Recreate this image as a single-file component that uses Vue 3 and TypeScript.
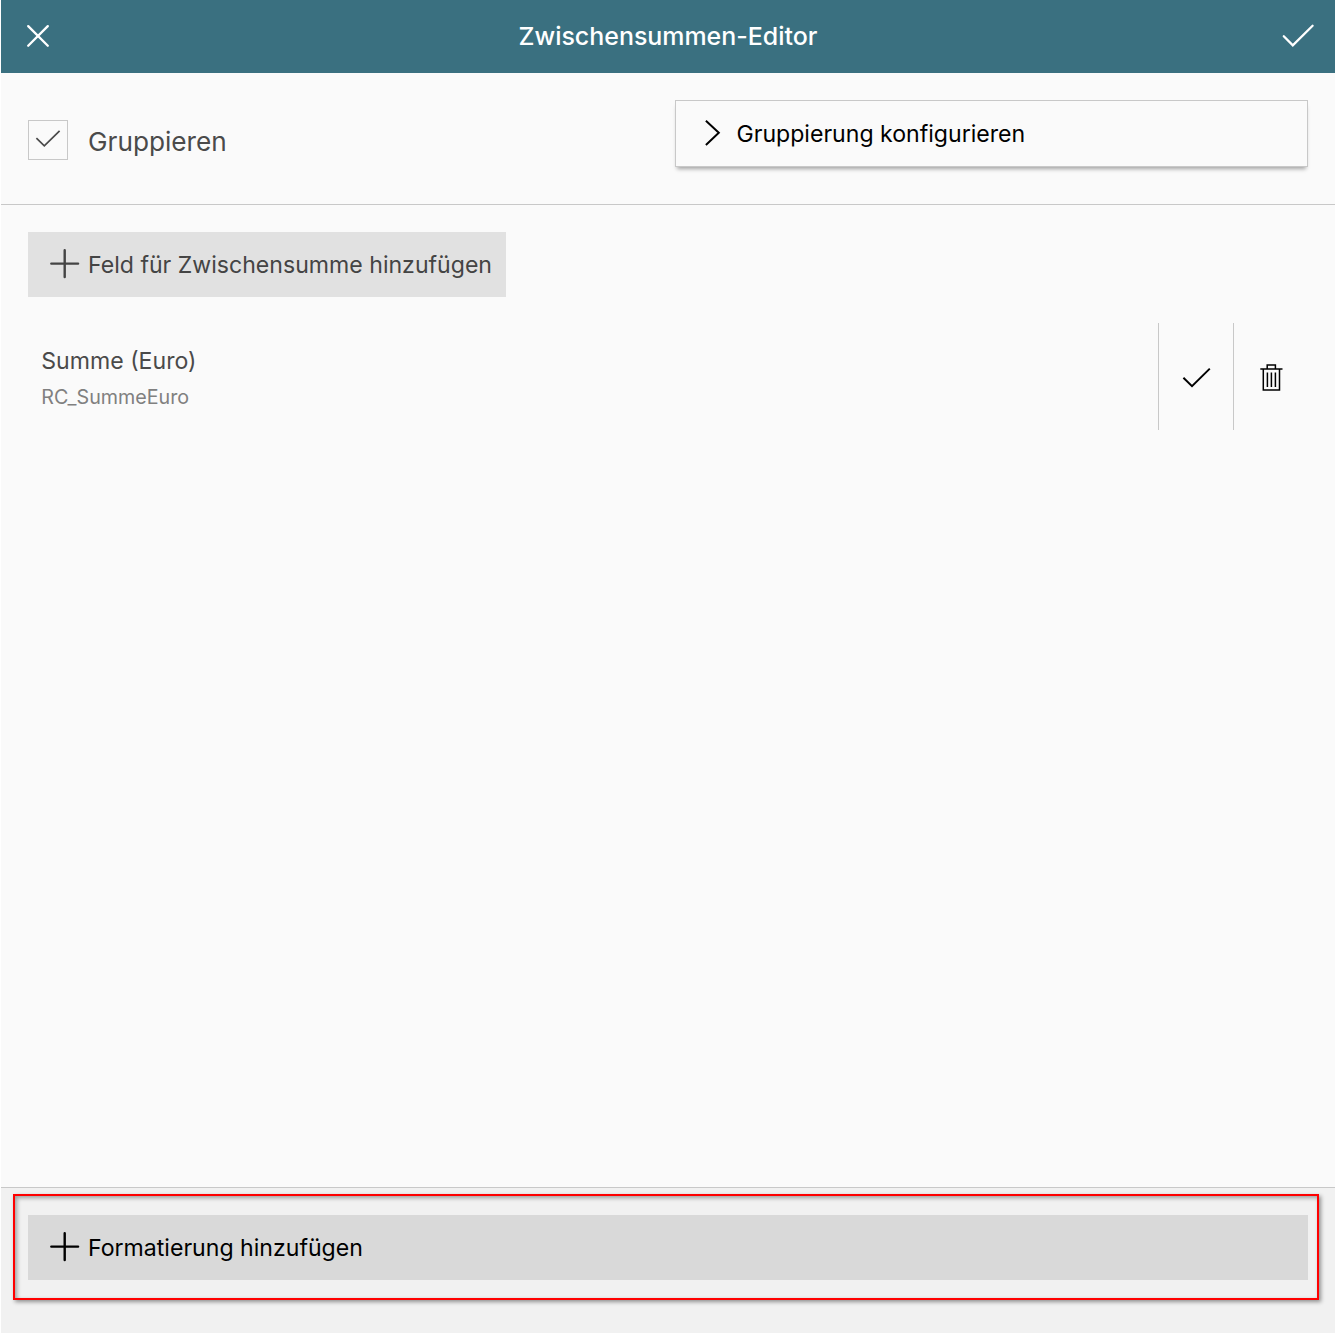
<script setup lang="ts">
import { ref } from 'vue'

interface SubtotalField {
  label: string
  name: string
}

const grouped = ref(true)
const fields = ref<SubtotalField[]>([{ label: 'Summe (Euro)', name: 'RC_SummeEuro' }])
</script>

<template>
  <div class="editor">
    <header class="bar">
      <svg width="24" height="24" viewBox="0 0 24 24">
        <path d="M2.2 2.1 21.8 21.7M21.8 2.1 2.2 21.7" />
      </svg>
      <h1>Zwischensummen-Editor</h1>
      <svg width="34" height="24" viewBox="0 0 34 24">
        <path d="M2.8 12.2 11.8 21.4 31.6 1.8" />
      </svg>
    </header>

    <section class="grouping">
      <div class="toggle" @click="grouped = !grouped">
        <span class="box">
          <svg v-if="grouped" width="38" height="38" viewBox="0 0 38 38">
            <path d="M7.4 17.2 15.3 24.8 30.6 9.8" />
          </svg>
        </span>
        <span>Gruppieren</span>
      </div>
      <button class="configure">
        <svg width="18" height="28" viewBox="0 0 18 28">
          <path d="M2.9 1.7 15.8 13.8 2.9 25.9" />
        </svg>
        <span>Gruppierung konfigurieren</span>
      </button>
    </section>

    <main class="content">
      <button class="add">
        <svg width="30" height="30" viewBox="0 0 30 30"><path d="M1.3 14.6H28.1M14.7 1.2V28" /></svg>
        <span>Feld für Zwischensumme hinzufügen</span>
      </button>
      <div v-for="field in fields" :key="field.name" class="row">
        <div class="names">
          <div class="label">{{ field.label }}</div>
          <div class="name">{{ field.name }}</div>
        </div>
        <div class="action">
          <svg width="74" height="107" viewBox="0 0 74 107">
            <path d="M24.4 54.8 33 63.2 50.8 45.6" stroke-width="2" />
          </svg>
        </div>
        <div class="action">
          <svg width="74" height="107" viewBox="0 0 74 107">
            <path d="M26.3 46H48.5M33.2 45.5V41.9H41.4V45.5" stroke-width="1.5" />
            <path d="M29.3 46V67.1H45.5V46M33.4 49.5V64M37.4 49.5V64M41.4 49.5V64" stroke-width="1.5" />
          </svg>
        </div>
      </div>
    </main>

    <footer class="bottom">
      <div class="frame">
        <button class="add wide">
          <svg width="30" height="30" viewBox="0 0 30 30"><path d="M1.3 14.6H28.1M14.7 1.2V28" /></svg>
          <span>Formatierung hinzufügen</span>
        </button>
      </div>
    </footer>
  </div>
</template>

<style>
body {
  background: #fff;
}
</style>

<style scoped>
* {
  box-sizing: border-box;
}

.editor {
  width: 1334px;
  height: 1333px;
  margin-left: 1px;
  display: flex;
  flex-direction: column;
  background: #fafafa;
  font-family: Inter, sans-serif;
  font-size: 23.1px;
  color: #4a4a4a;
}

svg {
  display: block;
  flex: none;
  fill: none;
  stroke: currentColor;
  stroke-width: 2;
}

span {
  white-space: nowrap;
}

button {
  border: 0;
  margin: 0;
  padding: 0;
  font: inherit;
  line-height: 28px;
  color: inherit;
  text-align: left;
}

.bar {
  height: 73px;
  padding: 0 20px 1px 25px;
  display: flex;
  align-items: center;
  justify-content: space-between;
  background: #3a7080;
  color: #fff;
}

.bar svg {
  stroke-width: 2.3;
  stroke-linecap: round;
}

.bar h1 {
  margin: 0;
  padding-left: 5px;
  font-size: 24.95px;
  font-weight: 500;
  line-height: 72px;
}

.grouping {
  height: 132px;
  padding: 27px 27px 0;
  display: flex;
  justify-content: space-between;
  align-items: flex-start;
  border-bottom: 1px solid #c8c8c8;
}

.toggle {
  display: flex;
  gap: 20px;
  margin-top: 20px;
  font-size: 26.2px;
  line-height: 43px;
}

.box {
  width: 40px;
  height: 40px;
  border: 1px solid #c8c8c8;
}

.box svg {
  stroke-width: 1.7;
}

.configure {
  width: 633px;
  height: 67px;
  padding: 1px 0 0 27px;
  display: flex;
  align-items: center;
  gap: 15.5px;
  background: #fafafa;
  border: 1px solid #c8c8c8;
  box-shadow: 0 4px 4px -2px rgba(0, 0, 0, 0.35);
  color: #000;
}

.configure svg {
  margin-top: -2px;
}

.content {
  flex: 1;
  padding: 27px 27px 0;
}

.add {
  width: 478px;
  height: 65px;
  padding: 1px 0 0 22px;
  display: flex;
  align-items: center;
  gap: 8px;
  background: #e1e1e1;
  color: #444;
}

.add svg {
  margin-top: -2px;
  stroke-width: 2.4;
  stroke-linecap: round;
}

.row {
  height: 107px;
  margin-top: 26px;
  display: flex;
}

.names {
  flex: 1;
  padding: 20px 0 0 13.3px;
}

.label {
  line-height: 36px;
}

.name {
  font-size: 19.7px;
  line-height: 36px;
  color: #808080;
}

.action {
  width: 75px;
  border-left: 1px solid #c8c8c8;
  color: #000;
}

.bottom {
  height: 146px;
  padding: 6px 16px 0 12px;
  background: #f1f1f1;
  border-top: 1px solid #c8c8c8;
}

.frame {
  height: 106px;
  padding: 19px 9px 0 13px;
  border: 2px solid #f00;
  box-shadow: 2px 2px 4px rgba(0, 0, 0, 0.4), inset 2px 2px 4px rgba(0, 0, 0, 0.35);
}

.wide {
  width: 1280px;
  background: #d9d9d9;
  color: #000;
}
</style>
